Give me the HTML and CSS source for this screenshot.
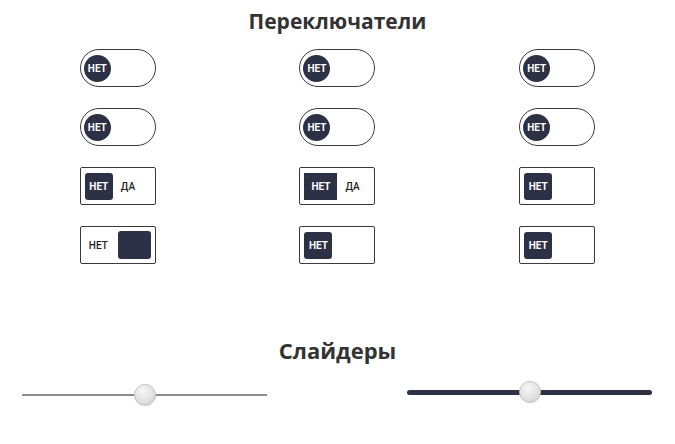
FILE: index.html
```html
<!DOCTYPE html>
<html lang="ru">
<head>
<meta charset="utf-8">
<link rel="stylesheet" href="styles.css">
</head>
<body>
<h1 class="title">Переключатели</h1>
<div class="grid">
  <div class="cell"><div class="pill"><span class="knob">НЕТ</span></div></div>
  <div class="cell"><div class="pill"><span class="knob">НЕТ</span></div></div>
  <div class="cell"><div class="pill"><span class="knob">НЕТ</span></div></div>

  <div class="cell"><div class="pill"><span class="knob">НЕТ</span></div></div>
  <div class="cell"><div class="pill"><span class="knob">НЕТ</span></div></div>
  <div class="cell"><div class="pill"><span class="knob">НЕТ</span></div></div>

  <div class="cell"><div class="box"><span class="block">НЕТ</span><span class="label">ДА</span></div></div>
  <div class="cell"><div class="box"><span class="block wide square">НЕТ</span><span class="label">ДА</span></div></div>
  <div class="cell"><div class="box"><span class="block">НЕТ</span></div></div>

  <div class="cell"><div class="box box-right"><span class="label-off">НЕТ</span><span class="block wide"></span></div></div>
  <div class="cell"><div class="box"><span class="block">НЕТ</span></div></div>
  <div class="cell"><div class="box"><span class="block">НЕТ</span></div></div>
</div>

<h2 class="title title-2">Слайдеры</h2>
<div class="sliders">
  <div class="slider slider-thin"><div class="track"></div><span class="thumb"></span></div>
  <div class="slider slider-thick"><div class="track"></div><span class="thumb"></span></div>
</div>
</body>
</html>
```

FILE: styles.css
```css
body {
  margin: 8px;
  font-family: Roboto, "Liberation Sans", sans-serif;
  background: #fff;
  color: #333;
}

.title {
  margin: 0;
  text-align: center;
  font-family: "Open Sans", Roboto, sans-serif;
  font-weight: 700;
  font-size: 21px;
  line-height: 26px;
  color: #333;
}

.grid {
  margin-top: 15px;
  display: grid;
  grid-template-columns: repeat(3, 1fr);
  row-gap: 21px;
}

.cell {
  display: flex;
  justify-content: center;
}

.pill {
  box-sizing: border-box;
  width: 76px;
  height: 38px;
  border: 1px solid #3a3a3a;
  border-radius: 19px;
  display: flex;
  align-items: center;
  padding-left: 3px;
}

.knob {
  width: 27px;
  height: 27px;
  border-radius: 50%;
  background: #2d3145;
  color: #fff;
  font-size: 10px;
  font-weight: 700;
  display: flex;
  align-items: center;
  justify-content: center;
}

.box {
  box-sizing: border-box;
  width: 76px;
  height: 38px;
  border: 1px solid #3a3a3a;
  border-radius: 2px;
  display: flex;
  align-items: center;
  padding: 0 3px 0 4px;
}

.box-right {
  justify-content: space-between;
  padding: 0 4px 0 8px;
}

.block {
  width: 28px;
  height: 27px;
  border-radius: 3px;
  background: #2d3145;
  color: #fff;
  font-size: 10px;
  font-weight: 700;
  display: flex;
  align-items: center;
  justify-content: center;
}

.block.wide {
  width: 33px;
  height: 28px;
}

.block.square {
  border-radius: 0;
  height: 27px;
}

.label {
  margin-left: 8px;
  font-size: 10px;
  font-weight: 500;
  color: #222;
}

.label-off {
  font-size: 10px;
  font-weight: 500;
  color: #222;
}

.title-2 {
  margin-top: 73px;
  font-size: 22px;
}

.sliders {
  margin-top: 20px;
  display: flex;
  justify-content: space-between;
  padding: 0 15px 0 14px;
}

.slider {
  position: relative;
  width: 245px;
  height: 24px;
  display: flex;
  align-items: center;
}

.track {
  width: 100%;
}

.slider-thin .track {
  height: 2px;
  background: #8c8c8c;
}

.slider-thick {
  margin-top: -3px;
}

.slider-thick .track {
  height: 5px;
  border-radius: 3px;
  background: #2d3145;
}

.thumb {
  position: absolute;
  left: 50%;
  top: 50%;
  width: 22px;
  height: 22px;
  margin: -11px 0 0 -11px;
  border-radius: 50%;
  box-sizing: border-box;
  border: 1px solid #c4c4c4;
  background: radial-gradient(circle at 40% 30%, #f6f6f6 0%, #e2e2e2 55%, #c8c8c8 100%);
}
```
